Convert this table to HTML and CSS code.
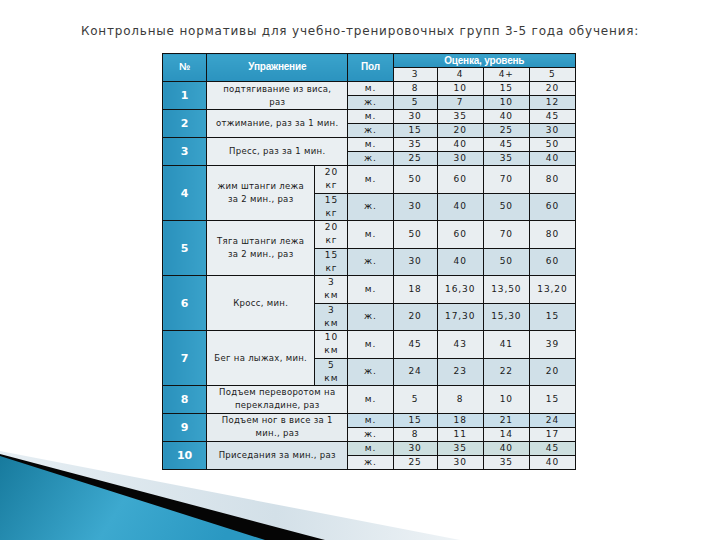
FILE: index.html
```html
<!DOCTYPE html>
<html lang="ru">
<head>
<meta charset="utf-8">
<link rel="stylesheet" href="styles.css">
</head>
<body>
<div class="slide">
  <h1 class="title">Контрольные нормативы для учебно-тренировочных групп 3-5 года обучения:</h1>
  <table class="norms">
    <colgroup>
      <col class="c-num"><col class="c-ex"><col class="c-kg"><col class="c-sex">
      <col class="c-g3"><col class="c-g"><col class="c-g"><col class="c-g">
    </colgroup>
    <tr class="h">
      <th rowspan="2" class="hb">№</th>
      <th rowspan="2" colspan="2" class="hb">Упражнение</th>
      <th rowspan="2" class="hb">Пол</th>
      <th colspan="4" class="hb hg">Оценка, уровень</th>
    </tr>
    <tr class="h"><td>3</td><td>4</td><td>4+</td><td>5</td></tr>

    <tr class="s"><td rowspan="2" class="num">1</td><td rowspan="2" colspan="2" class="ex">подтягивание из виса,<br>раз</td><td>м.</td><td>8</td><td>10</td><td>15</td><td>20</td></tr>
    <tr class="s d"><td>ж.</td><td>5</td><td>7</td><td>10</td><td>12</td></tr>

    <tr class="s"><td rowspan="2" class="num">2</td><td rowspan="2" colspan="2" class="ex">отжимание, раз за 1 мин.</td><td>м.</td><td>30</td><td>35</td><td>40</td><td>45</td></tr>
    <tr class="s d"><td>ж.</td><td>15</td><td>20</td><td>25</td><td>30</td></tr>

    <tr class="s"><td rowspan="2" class="num">3</td><td rowspan="2" colspan="2" class="ex">Пресс, раз за 1 мин.</td><td>м.</td><td>35</td><td>40</td><td>45</td><td>50</td></tr>
    <tr class="s d"><td>ж.</td><td>25</td><td>30</td><td>35</td><td>40</td></tr>

    <tr class="b"><td rowspan="2" class="num">4</td><td rowspan="2" class="ex">жим штанги лежа<br>за 2 мин., раз</td><td class="kg">20<br>кг</td><td>м.</td><td>50</td><td>60</td><td>70</td><td>80</td></tr>
    <tr class="b d"><td class="kg">15<br>кг</td><td>ж.</td><td>30</td><td>40</td><td>50</td><td>60</td></tr>

    <tr class="b"><td rowspan="2" class="num">5</td><td rowspan="2" class="ex">Тяга штанги лежа<br>за 2 мин., раз</td><td class="kg">20<br>кг</td><td>м.</td><td>50</td><td>60</td><td>70</td><td>80</td></tr>
    <tr class="b d"><td class="kg">15<br>кг</td><td>ж.</td><td>30</td><td>40</td><td>50</td><td>60</td></tr>

    <tr class="b"><td rowspan="2" class="num">6</td><td rowspan="2" class="ex">Кросс, мин.</td><td class="kg">3<br>км</td><td>м.</td><td>18</td><td>16,30</td><td>13,50</td><td>13,20</td></tr>
    <tr class="b d"><td class="kg">3<br>км</td><td>ж.</td><td>20</td><td>17,30</td><td>15,30</td><td>15</td></tr>

    <tr class="b"><td rowspan="2" class="num">7</td><td rowspan="2" class="ex">Бег на лыжах, мин.</td><td class="kg">10<br>км</td><td>м.</td><td>45</td><td>43</td><td>41</td><td>39</td></tr>
    <tr class="b d"><td class="kg">5<br>км</td><td>ж.</td><td>24</td><td>23</td><td>22</td><td>20</td></tr>

    <tr class="b"><td class="num">8</td><td colspan="2" class="ex">Подъем переворотом на<br>перекладине, раз</td><td>м.</td><td>5</td><td>8</td><td>10</td><td>15</td></tr>

    <tr class="s d2"><td rowspan="2" class="num">9</td><td rowspan="2" colspan="2" class="ex">Подъем ног в висе за 1<br>мин., раз</td><td>м.</td><td>15</td><td>18</td><td>21</td><td>24</td></tr>
    <tr class="s"><td>ж.</td><td>8</td><td>11</td><td>14</td><td>17</td></tr>

    <tr class="s d3"><td rowspan="2" class="num">10</td><td rowspan="2" colspan="2" class="ex exd">Приседания за мин., раз</td><td>м.</td><td>30</td><td>35</td><td>40</td><td>45</td></tr>
    <tr class="s"><td>ж.</td><td>25</td><td>30</td><td>35</td><td>40</td></tr>
  </table>

  <svg class="corner" width="470" height="92" viewBox="0 0 470 92" aria-hidden="true">
    <defs>
      <linearGradient id="lg" x1="0" y1="0" x2="1" y2="0">
        <stop offset="0" stop-color="#e6eef3"/>
        <stop offset="0.6" stop-color="#d3e0e8"/>
        <stop offset="1" stop-color="#eef3f6"/>
      </linearGradient>
      <linearGradient id="bg" x1="0" y1="0" x2="1" y2="0.2">
        <stop offset="0" stop-color="#177a9d"/>
        <stop offset="0.55" stop-color="#3da9cf"/>
        <stop offset="1" stop-color="#2a98c2"/>
      </linearGradient>
    </defs>
    <polygon points="0,3 460,92 0,92" fill="url(#lg)"/>
    <polygon points="0,6 325,92 0,92" fill="#050505"/>
    <polygon points="0,8 265,92 0,92" fill="url(#bg)"/>
  </svg>
</div>
</body>
</html>
```

FILE: styles.css
```css
html, body {
  margin: 0;
  padding: 0;
  background: #ffffff;
}

.slide {
  position: relative;
  width: 720px;
  height: 540px;
  overflow: hidden;
  background: #ffffff;
}

.title {
  margin: 0;
  padding-top: 23px;
  height: 30px;
  box-sizing: border-box;
  text-align: center;
  font-family: "DejaVu Sans", sans-serif;
  font-weight: normal;
  font-size: 12px;
  letter-spacing: 0.8px;
  color: #3a3a3a;
  line-height: 16px;
}

.norms {
  margin: 23px 0 0 162px;
  border-collapse: collapse;
  table-layout: fixed;
  width: 414px;
  font-family: "DejaVu Sans", sans-serif;
  font-size: 9px;
  letter-spacing: 0.9px;
  color: #1a1a1a;
}

.c-num { width: 44px; }
.c-ex { width: 108px; }
.c-kg { width: 33px; }
.c-sex { width: 45px; }
.c-g3 { width: 44px; }
.c-g { width: 46px; }

.norms td,
.norms th {
  border: 1px solid #111;
  padding: 0;
  text-align: center;
  vertical-align: middle;
  line-height: 13px;
  background: #e9eef1;
  overflow: hidden;
  white-space: nowrap;
}

.norms tr.h { height: 14px; }
.norms tr.s { height: 13.7px; }
.norms tr.b { height: 27.5px; }

.norms th.hb {
  background: linear-gradient(#3aa3cb, #2b93bf);
  color: #ffffff;
  font-family: "Liberation Sans", sans-serif;
  font-weight: bold;
  font-size: 10px;
  letter-spacing: -0.2px;
  padding-bottom: 3px;
}

.norms th.hg {
  padding-bottom: 0;
}

.norms td.num {
  background: linear-gradient(90deg, #2a91bc, #3aa2ca);
  color: #ffffff;
  font-weight: bold;
  font-size: 11px;
  letter-spacing: 0;
}

.norms td.ex {
  background: #eaeff2;
  font-size: 8.5px;
  letter-spacing: 0.3px;
}

.norms td.exd {
  background: #d9e4ea;
}

.norms tr.d td {
  background: #d0e0e8;
}

.norms tr.d2 td {
  background: #c9dfeb;
}

.norms tr.d3 td {
  background: #cddfdf;
}

.norms tr.d2 td.ex,
.norms tr.d3 td.ex {
  background: #e6ecef;
}

.norms tr.d3 td.exd {
  background: #d9e4ea;
}

.norms tr td.num,
.norms tr.d2 td.num,
.norms tr.d3 td.num {
  background: linear-gradient(90deg, #2a91bc, #3aa2ca);
}

.norms td.kg {
  line-height: 13px;
  vertical-align: top;
}

.corner {
  position: absolute;
  left: 0;
  bottom: 0;
  display: block;
}
```
